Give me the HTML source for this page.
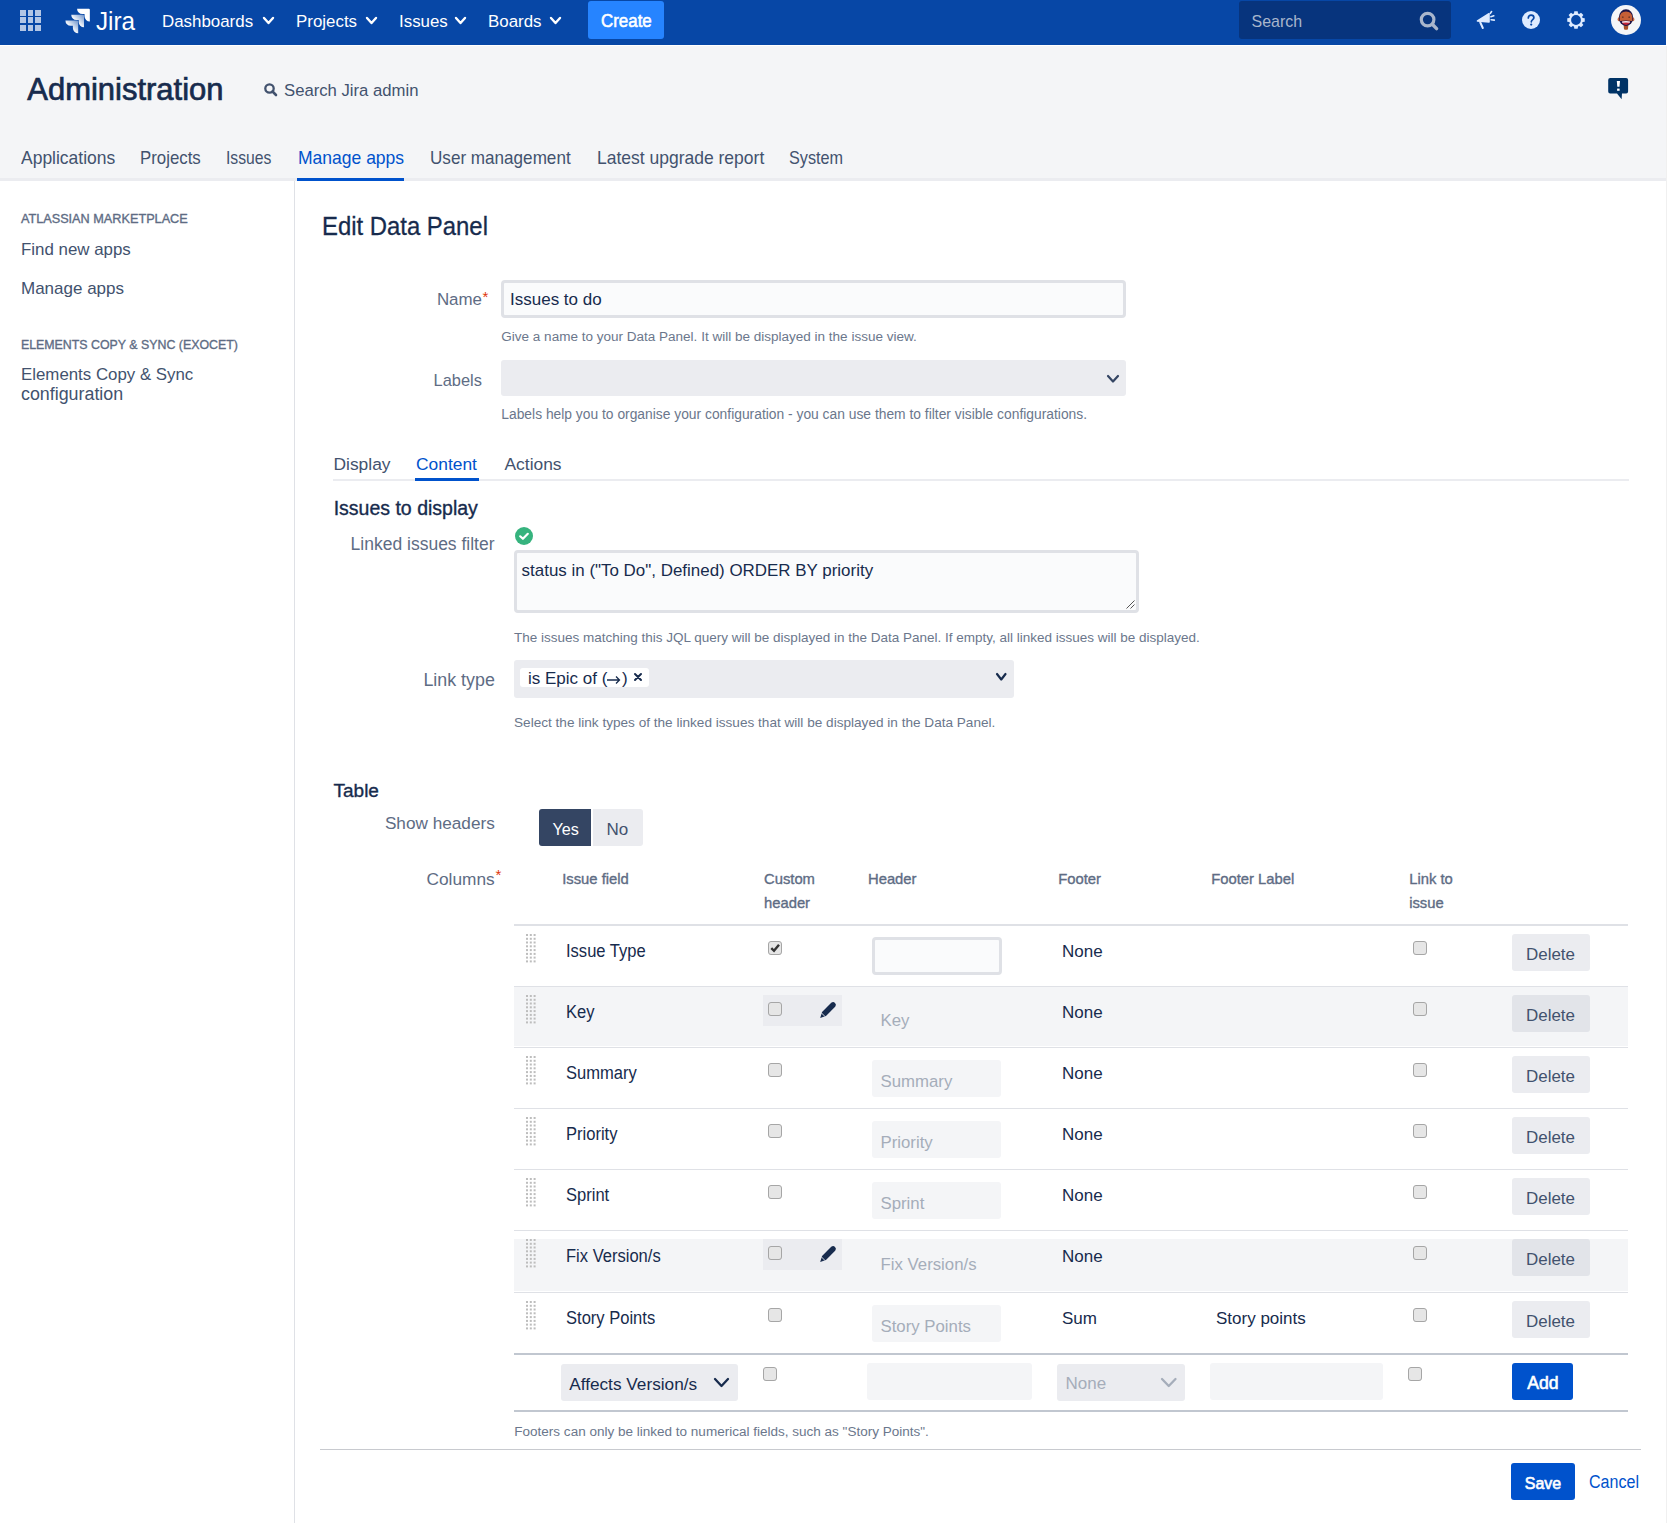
<!DOCTYPE html>
<html><head><meta charset="utf-8"><title>Edit Data Panel - Jira</title>
<style>
html,body{margin:0;padding:0;}
body{width:1667px;height:1523px;position:relative;overflow:hidden;background:#fff;font-family:"Liberation Sans",sans-serif;}
.t{position:absolute;white-space:nowrap;}
.r{position:absolute;}
svg.r{overflow:visible;}
</style></head><body>
<div class="r" style="left:0px;top:0px;width:1666px;height:45px;background:#0747A6;"></div>
<div class="r" style="left:20.0px;top:10.0px;width:5.800000000000001px;height:5.800000000000001px;background:#B3C6E5;"></div>
<div class="r" style="left:20.0px;top:17.4px;width:5.800000000000001px;height:5.800000000000001px;background:#B3C6E5;"></div>
<div class="r" style="left:20.0px;top:24.8px;width:5.800000000000001px;height:5.800000000000001px;background:#B3C6E5;"></div>
<div class="r" style="left:27.7px;top:10.0px;width:5.800000000000001px;height:5.800000000000001px;background:#B3C6E5;"></div>
<div class="r" style="left:27.7px;top:17.4px;width:5.800000000000001px;height:5.800000000000001px;background:#B3C6E5;"></div>
<div class="r" style="left:27.7px;top:24.8px;width:5.800000000000001px;height:5.800000000000001px;background:#B3C6E5;"></div>
<div class="r" style="left:35.4px;top:10.0px;width:5.799999999999997px;height:5.800000000000001px;background:#B3C6E5;"></div>
<div class="r" style="left:35.4px;top:17.4px;width:5.799999999999997px;height:5.800000000000001px;background:#B3C6E5;"></div>
<div class="r" style="left:35.4px;top:24.8px;width:5.799999999999997px;height:5.800000000000001px;background:#B3C6E5;"></div>
<svg class="r" style="left:63px;top:5.5px" width="30" height="30" viewBox="0 0 32 32">
<defs><linearGradient id="lg1" x1="100%" y1="0%" x2="40%" y2="60%"><stop offset="0" stop-color="#fff" stop-opacity="0.4"/><stop offset="1" stop-color="#fff"/></linearGradient></defs>
<path fill="#fff" d="M27.545 3.003H15.003a5.66 5.66 0 0 0 5.66 5.66h2.31v2.23a5.66 5.66 0 0 0 5.65 5.65V4.083a1.08 1.08 0 0 0-1.078-1.08z"/>
<path fill="url(#lg1)" d="M21.34 9.253H8.79a5.66 5.66 0 0 0 5.65 5.65h2.32v2.24a5.66 5.66 0 0 0 5.66 5.65V10.333a1.08 1.08 0 0 0-1.08-1.08z"/>
<path fill="url(#lg1)" d="M15.13 15.503H2.58a5.66 5.66 0 0 0 5.66 5.66h2.32v2.23a5.66 5.66 0 0 0 5.65 5.65V16.583a1.08 1.08 0 0 0-1.08-1.08z"/>
</svg>
<div class="t" style="left:96.00px;top:4.12px;font-size:26.5px;line-height:34px;color:#fff;transform:scaleX(0.915);transform-origin:0 0;">Jira</div>
<div class="t" style="left:162.00px;top:10.64px;font-size:16.9px;line-height:22px;color:#fff;">Dashboards</div>
<svg class="r" style="left:262px;top:15.5px" width="13" height="9.0"><path d="M2 2 L6.5 7.0 L11 2" fill="none" stroke="#fff" stroke-width="2.4" stroke-linecap="round" stroke-linejoin="round"/></svg>
<div class="t" style="left:296.00px;top:10.64px;font-size:16.9px;line-height:22px;color:#fff;">Projects</div>
<svg class="r" style="left:365px;top:15.5px" width="13" height="9.0"><path d="M2 2 L6.5 7.0 L11 2" fill="none" stroke="#fff" stroke-width="2.4" stroke-linecap="round" stroke-linejoin="round"/></svg>
<div class="t" style="left:399.00px;top:10.64px;font-size:16.9px;line-height:22px;color:#fff;">Issues</div>
<svg class="r" style="left:454px;top:15.5px" width="13" height="9.0"><path d="M2 2 L6.5 7.0 L11 2" fill="none" stroke="#fff" stroke-width="2.4" stroke-linecap="round" stroke-linejoin="round"/></svg>
<div class="t" style="left:488.00px;top:10.64px;font-size:16.9px;line-height:22px;color:#fff;">Boards</div>
<svg class="r" style="left:549px;top:15.5px" width="13" height="9.0"><path d="M2 2 L6.5 7.0 L11 2" fill="none" stroke="#fff" stroke-width="2.4" stroke-linecap="round" stroke-linejoin="round"/></svg>
<div class="r" style="left:588px;top:1px;width:76px;height:38px;background:#2684FF;border-radius:3px;"></div>
<div class="t" style="left:600.88px;top:9.19px;font-size:18.2px;line-height:24px;color:#fff;-webkit-text-stroke:0.55px #fff;transform:scaleX(0.93);transform-origin:0 0;">Create</div>
<div class="r" style="left:1239px;top:1px;width:212px;height:38px;background:#07347D;border-radius:3px;"></div>
<div class="t" style="left:1251.50px;top:11.47px;font-size:15.96px;line-height:21px;color:#A9B6CC;">Search</div>
<svg class="r" style="left:1416px;top:8px" width="26" height="26"><circle cx="11.6" cy="11.6" r="6.3" fill="none" stroke="#A9B6CC" stroke-width="3.2"/><path d="M16.3 16.3 L20.6 20.6" stroke="#A9B6CC" stroke-width="3.4" stroke-linecap="round"/></svg>
<svg class="r" style="left:1474px;top:8px" width="24" height="24" fill="#DEEBFF" stroke="#DEEBFF">
<path d="M3.5 13 L15 5.8 L15 14 Z" stroke-width="1.6" stroke-linejoin="round"/>
<path d="M6.3 14.5 L8.8 20" stroke-width="2" stroke-linecap="round"/>
<path d="M16.2 5.4 L17.6 3.6 M16.9 8.7 L19.8 7.8 M17.1 11.8 L20.3 12.1" stroke-width="1.6" stroke-linecap="round"/></svg>
<svg class="r" style="left:1522px;top:11px" width="18" height="18"><circle cx="9" cy="9" r="9" fill="#DEEBFF"/>
<path d="M6.3 7 C6.3 5.2 7.5 4.2 9.1 4.2 C10.8 4.2 11.9 5.3 11.9 6.7 C11.9 8.5 9.3 8.7 9.3 10.8" fill="none" stroke="#0747A6" stroke-width="1.7" stroke-linecap="round"/><circle cx="9.2" cy="13.6" r="1.1" fill="#0747A6"/></svg>
<svg class="r" style="left:1567px;top:11px" width="18" height="18"><path fill-rule="evenodd" fill="#DEEBFF" d="M6.96,2.41 L7.32,0.26 L10.68,0.26 L11.04,2.41 L12.22,2.90 L13.99,1.63 L16.37,4.01 L15.10,5.78 L15.59,6.96 L17.74,7.32 L17.74,10.68 L15.59,11.04 L15.10,12.22 L16.37,13.99 L13.99,16.37 L12.22,15.10 L11.04,15.59 L10.68,17.74 L7.32,17.74 L6.96,15.59 L5.78,15.10 L4.01,16.37 L1.63,13.99 L2.90,12.22 L2.41,11.04 L0.26,10.68 L0.26,7.32 L2.41,6.96 L2.90,5.78 L1.63,4.01 L4.01,1.63 L5.78,2.90 Z M9 4.1 A4.9 4.9 0 1 0 9 13.9 A4.9 4.9 0 1 0 9 4.1 Z"/></svg>
<svg class="r" style="left:1611px;top:5px" width="30" height="30" viewBox="0 0 30 30">
<circle cx="15" cy="15" r="15" fill="#F4F5F7"/>
<path d="M12.6 19 H17.4 L17 24.2 Q15 25.4 13 24.2 Z" fill="#A9522A"/>
<ellipse cx="8" cy="14.4" rx="1.4" ry="1.8" fill="#C65F36"/>
<ellipse cx="22" cy="14.4" rx="1.4" ry="1.8" fill="#C65F36"/>
<ellipse cx="15" cy="12.6" rx="7.2" ry="8.3" fill="#1D1446"/>
<path d="M8.6 12.5 Q9 6.8 15 6.6 Q21 6.8 21.4 12.5 L21 16 Q15 15 9 16 Z" fill="#C65F36"/>
<circle cx="11.8" cy="12.2" r="0.9" fill="#7A3A28"/><circle cx="18.2" cy="12.2" r="0.9" fill="#7A3A28"/>
<path d="M11 16.6 Q15 15.6 19 16.6 Q18.6 19.8 15 19.9 Q11.4 19.8 11 16.6 Z" fill="#C4243A"/>
<path d="M11 16.6 Q15 15.6 19 16.6 L18.8 17.8 Q15 17.2 11.2 17.8 Z" fill="#F0F0F5"/>
</svg>
<div class="r" style="left:0px;top:46px;width:1666px;height:132px;background:#F4F5F7;"></div>
<div class="r" style="left:0px;top:178px;width:1666px;height:3px;background:#EBECF0;"></div>
<div class="r" style="left:1666px;top:46px;width:1px;height:1477px;background:#F0F0F0;"></div>
<div class="r" style="left:1666px;top:0px;width:1px;height:46px;background:#FFFFFF;"></div>
<div class="t" style="left:27.35px;top:69.77px;font-size:30.96px;line-height:40px;color:#172B4D;-webkit-text-stroke:0.7px #172B4D;">Administration</div>
<svg class="r" style="left:262px;top:81px" width="18" height="18"><circle cx="7.5" cy="7.5" r="4.2" fill="none" stroke="#42526E" stroke-width="2.3"/><path d="M10.5 10.5 L14 14" stroke="#42526E" stroke-width="2.6" stroke-linecap="round"/></svg>
<div class="t" style="left:284.00px;top:79.71px;font-size:16.7px;line-height:22px;color:#42526E;">Search Jira admin</div>
<svg class="r" style="left:1606px;top:76px" width="26" height="26" viewBox="0 0 26 26">
<path d="M4.2 2 H20.1 Q22.1 2 22.1 4 V15.6 Q22.1 17.6 20.1 17.6 H16 L15.6 23.3 L11 17.6 H4.2 Q2.2 17.6 2.2 15.6 V4 Q2.2 2 4.2 2 Z" fill="#003366"/>
<path d="M10.8 5 H14 L13.5 10.8 H11.3 Z" fill="#fff"/><rect x="11.1" y="12.6" width="2.5" height="2.2" fill="#fff"/></svg>
<div class="t" style="left:20.60px;top:145.42px;font-size:19.0px;line-height:25px;color:#42526E;transform:scaleX(0.9198);transform-origin:0 0;">Applications</div>
<div class="t" style="left:140.40px;top:145.42px;font-size:19.0px;line-height:25px;color:#42526E;transform:scaleX(0.885);transform-origin:0 0;">Projects</div>
<div class="t" style="left:226.40px;top:145.42px;font-size:19.0px;line-height:25px;color:#42526E;transform:scaleX(0.8268);transform-origin:0 0;">Issues</div>
<div class="t" style="left:297.70px;top:145.42px;font-size:19.0px;line-height:25px;color:#0052CC;transform:scaleX(0.9215);transform-origin:0 0;">Manage apps</div>
<div class="t" style="left:429.80px;top:145.42px;font-size:19.0px;line-height:25px;color:#42526E;transform:scaleX(0.8998);transform-origin:0 0;">User management</div>
<div class="t" style="left:596.50px;top:145.42px;font-size:19.0px;line-height:25px;color:#42526E;transform:scaleX(0.9205);transform-origin:0 0;">Latest upgrade report</div>
<div class="t" style="left:789.00px;top:145.42px;font-size:19.0px;line-height:25px;color:#42526E;transform:scaleX(0.8535);transform-origin:0 0;">System</div>
<div class="r" style="left:297px;top:178px;width:107px;height:3px;background:#0052CC;"></div>
<div class="r" style="left:294px;top:181px;width:1px;height:1342px;background:#DFE1E6;"></div>
<div class="t" style="left:20.88px;top:211.40px;font-size:12.7px;line-height:17px;color:#5E6C84;-webkit-text-stroke:0.35px #5E6C84;">ATLASSIAN MARKETPLACE</div>
<div class="t" style="left:21.00px;top:239.45px;font-size:16.89px;line-height:22px;color:#42526E;">Find new apps</div>
<div class="t" style="left:21.00px;top:277.61px;font-size:17.0px;line-height:22px;color:#42526E;">Manage apps</div>
<div class="t" style="left:20.88px;top:337.21px;font-size:12.39px;line-height:16px;color:#5E6C84;-webkit-text-stroke:0.35px #5E6C84;">ELEMENTS COPY &amp; SYNC (EXOCET)</div>
<div class="t" style="left:21.00px;top:364.06px;font-size:16.85px;line-height:22px;color:#42526E;">Elements Copy &amp; Sync</div>
<div class="t" style="left:21.00px;top:383.01px;font-size:17.85px;line-height:23px;color:#42526E;">configuration</div>
<div class="t" style="left:321.85px;top:208.99px;font-size:26.3px;line-height:34px;color:#172B4D;-webkit-text-stroke:0.3px #172B4D;transform:scaleX(0.9082);transform-origin:0 0;">Edit Data Panel</div>
<div class="t" style="left:436.88px;top:289.34px;font-size:16.9px;line-height:22px;color:#5E6C84;">Name</div>
<div class="t" style="left:482.5px;top:289px;font-size:15px;line-height:15px;color:#DE350B">*</div>
<div class="r" style="left:501px;top:280px;width:625px;height:38px;background:#FAFBFC;border:3px solid #DFE1E6;border-radius:4px;box-sizing:border-box;"></div>
<div class="t" style="left:510.00px;top:289.31px;font-size:17px;line-height:22px;color:#172B4D;">Issues to do</div>
<div class="t" style="left:501.30px;top:328.42px;font-size:13.52px;line-height:18px;color:#6B778C;">Give a name to your Data Panel. It will be displayed in the issue view.</div>
<div class="t" style="left:433.62px;top:370.32px;font-size:16.4px;line-height:21px;color:#5E6C84;">Labels</div>
<div class="r" style="left:501px;top:360px;width:625px;height:36px;background:#EBECF0;border-radius:3px;"></div>
<svg class="r" style="left:1105.5px;top:374px" width="14.0" height="9.5"><path d="M2 2 L7.0 7.5 L12.0 2" fill="none" stroke="#344563" stroke-width="2.2" stroke-linecap="round" stroke-linejoin="round"/></svg>
<div class="t" style="left:501.30px;top:405.40px;font-size:13.84px;line-height:18px;color:#6B778C;">Labels help you to organise your configuration - you can use them to filter visible configurations.</div>
<div class="r" style="left:333px;top:479px;width:1296px;height:2px;background:#EBECF0;"></div>
<div class="t" style="left:333.50px;top:452.67px;font-size:17.4px;line-height:23px;color:#42526E;">Display</div>
<div class="t" style="left:416.00px;top:452.67px;font-size:17.4px;line-height:23px;color:#0052CC;">Content</div>
<div class="t" style="left:504.50px;top:452.67px;font-size:17.4px;line-height:23px;color:#42526E;">Actions</div>
<div class="r" style="left:415px;top:478px;width:64px;height:3px;background:#0052CC;"></div>
<div class="t" style="left:333.68px;top:495.54px;font-size:19.51px;line-height:25px;color:#172B4D;-webkit-text-stroke:0.35px #172B4D;">Issues to display</div>
<div class="t" style="left:350.58px;top:533.24px;font-size:17.5px;line-height:23px;color:#5E6C84;">Linked issues filter</div>
<svg class="r" style="left:515px;top:527px" width="18" height="18"><circle cx="9" cy="9" r="9" fill="#36B37E"/><path d="M5.2 9.3 L7.9 11.8 L12.8 6.8" fill="none" stroke="#fff" stroke-width="2.2" stroke-linecap="round" stroke-linejoin="round"/></svg>
<div class="r" style="left:514px;top:550px;width:625px;height:63px;background:#FAFBFC;border:3px solid #DFE1E6;border-radius:4px;box-sizing:border-box;"></div>
<div class="t" style="left:521.60px;top:560.32px;font-size:16.96px;line-height:22px;color:#172B4D;">status in ("To Do", Defined) ORDER BY priority</div>
<svg class="r" style="left:1124px;top:598px" width="12" height="12"><path d="M10.5 2.5 L2.5 10.5 M10.5 6.5 L6.5 10.5" stroke="#555" stroke-width="1"/></svg>
<div class="t" style="left:514.00px;top:629.22px;font-size:13.5px;line-height:18px;color:#6B778C;">The issues matching this JQL query will be displayed in the Data Panel. If empty, all linked issues will be displayed.</div>
<div class="t" style="left:423.40px;top:668.91px;font-size:17.85px;line-height:23px;color:#5E6C84;">Link type</div>
<div class="r" style="left:514px;top:660px;width:500px;height:38px;background:#EBECF0;border-radius:3px;"></div>
<div class="r" style="left:520px;top:668px;width:129px;height:19px;background:#fff;border-radius:3px;"></div>
<div class="t" style="left:528.00px;top:668.11px;font-size:17px;line-height:22px;color:#172B4D;">is Epic of (</div>
<svg class="r" style="left:606px;top:671px" width="16" height="16"><path d="M1 9 H13.5 M10 5.5 L13.5 9 L10 12.5" fill="none" stroke="#172B4D" stroke-width="1.3"/></svg>
<div class="t" style="left:622.00px;top:668.11px;font-size:17px;line-height:22px;color:#172B4D;">)</div>
<svg class="r" style="left:633px;top:672px" width="10" height="10"><path d="M2 2 L8 8 M8 2 L2 8" stroke="#172B4D" stroke-width="2" stroke-linecap="round"/></svg>
<svg class="r" style="left:994.5px;top:672px" width="12.5" height="9.5"><path d="M2 2 L6.25 7.5 L10.5 2" fill="none" stroke="#172B4D" stroke-width="2.2" stroke-linecap="round" stroke-linejoin="round"/></svg>
<div class="t" style="left:514.00px;top:713.79px;font-size:13.6px;line-height:18px;color:#6B778C;">Select the link types of the linked issues that will be displayed in the Data Panel.</div>
<div class="t" style="left:333.48px;top:778.11px;font-size:19.02px;line-height:25px;color:#172B4D;-webkit-text-stroke:0.35px #172B4D;">Table</div>
<div class="t" style="left:384.89px;top:812.44px;font-size:17.2px;line-height:22px;color:#5E6C84;">Show headers</div>
<div class="r" style="left:539px;top:809px;width:52px;height:37px;background:#344563;border-radius:3px 0 0 3px;"></div>
<div class="r" style="left:593px;top:809px;width:50px;height:37px;background:#EBECF0;border-radius:0 3px 3px 0;"></div>
<div class="t" style="left:552.50px;top:819.39px;font-size:16.2px;line-height:21px;color:#fff;">Yes</div>
<div class="t" style="left:606.60px;top:818.61px;font-size:17px;line-height:22px;color:#42526E;">No</div>
<div class="t" style="left:426.47px;top:867.91px;font-size:17.3px;line-height:22px;color:#5E6C84;">Columns</div>
<div class="t" style="left:495.5px;top:867px;font-size:15px;line-height:15px;color:#DE350B">*</div>
<div class="t" style="left:562.17px;top:869.87px;font-size:14.8px;line-height:19px;color:#5E6C84;-webkit-text-stroke:0.35px #5E6C84;">Issue field</div>
<div class="t" style="left:763.97px;top:869.87px;font-size:14.8px;line-height:19px;color:#5E6C84;-webkit-text-stroke:0.35px #5E6C84;">Custom</div>
<div class="t" style="left:763.97px;top:894.27px;font-size:14.8px;line-height:19px;color:#5E6C84;-webkit-text-stroke:0.35px #5E6C84;">header</div>
<div class="t" style="left:867.97px;top:869.87px;font-size:14.8px;line-height:19px;color:#5E6C84;-webkit-text-stroke:0.35px #5E6C84;">Header</div>
<div class="t" style="left:1058.17px;top:869.87px;font-size:14.8px;line-height:19px;color:#5E6C84;-webkit-text-stroke:0.35px #5E6C84;">Footer</div>
<div class="t" style="left:1211.17px;top:869.87px;font-size:14.8px;line-height:19px;color:#5E6C84;-webkit-text-stroke:0.35px #5E6C84;">Footer Label</div>
<div class="t" style="left:1409.17px;top:869.87px;font-size:14.8px;line-height:19px;color:#5E6C84;-webkit-text-stroke:0.35px #5E6C84;">Link to</div>
<div class="t" style="left:1409.17px;top:894.47px;font-size:14.8px;line-height:19px;color:#5E6C84;-webkit-text-stroke:0.35px #5E6C84;">issue</div>
<div class="r" style="left:514px;top:924px;width:1114px;height:2px;background:#DFE1E6;"></div>
<svg class="r" style="left:526px;top:933.8px" width="12" height="30"><rect x="0.0" y="0.0" width="2" height="2" fill="#BDBDBD"/><rect x="0.0" y="3.8" width="2" height="2" fill="#BDBDBD"/><rect x="0.0" y="7.5" width="2" height="2" fill="#BDBDBD"/><rect x="0.0" y="11.3" width="2" height="2" fill="#BDBDBD"/><rect x="0.0" y="15.1" width="2" height="2" fill="#BDBDBD"/><rect x="0.0" y="18.9" width="2" height="2" fill="#BDBDBD"/><rect x="0.0" y="22.6" width="2" height="2" fill="#BDBDBD"/><rect x="0.0" y="26.4" width="2" height="2" fill="#BDBDBD"/><rect x="3.8" y="0.0" width="2" height="2" fill="#BDBDBD"/><rect x="3.8" y="3.8" width="2" height="2" fill="#BDBDBD"/><rect x="3.8" y="7.5" width="2" height="2" fill="#BDBDBD"/><rect x="3.8" y="11.3" width="2" height="2" fill="#BDBDBD"/><rect x="3.8" y="15.1" width="2" height="2" fill="#BDBDBD"/><rect x="3.8" y="18.9" width="2" height="2" fill="#BDBDBD"/><rect x="3.8" y="22.6" width="2" height="2" fill="#BDBDBD"/><rect x="3.8" y="26.4" width="2" height="2" fill="#BDBDBD"/><rect x="7.6" y="0.0" width="2" height="2" fill="#BDBDBD"/><rect x="7.6" y="3.8" width="2" height="2" fill="#BDBDBD"/><rect x="7.6" y="7.5" width="2" height="2" fill="#BDBDBD"/><rect x="7.6" y="11.3" width="2" height="2" fill="#BDBDBD"/><rect x="7.6" y="15.1" width="2" height="2" fill="#BDBDBD"/><rect x="7.6" y="18.9" width="2" height="2" fill="#BDBDBD"/><rect x="7.6" y="22.6" width="2" height="2" fill="#BDBDBD"/><rect x="7.6" y="26.4" width="2" height="2" fill="#BDBDBD"/></svg>
<div class="t" style="left:566.00px;top:939.90px;font-size:17.6px;line-height:23px;color:#172B4D;transform:scaleX(0.94);transform-origin:0 0;">Issue Type</div>
<svg class="r" style="left:768px;top:941px" width="14" height="15"><rect x="0.5" y="1" width="13" height="13" rx="2.5" fill="#9E9E9E" opacity="0.35"/><rect x="0.5" y="0.5" width="13" height="13" rx="2.5" fill="#E6E6E6" stroke="#A6A6A6" stroke-width="1"/><path d="M3.3 7.2 L6 9.8 L11 3.8" fill="none" stroke="#333" stroke-width="2.4" stroke-linejoin="miter"/></svg>
<div class="r" style="left:872px;top:937px;width:130px;height:38px;background:#FAFBFC;border:3px solid #DFE1E6;border-radius:4px;box-sizing:border-box;"></div>
<div class="t" style="left:1062.00px;top:940.61px;font-size:17px;line-height:22px;color:#172B4D;">None</div>
<svg class="r" style="left:1413px;top:941px" width="14" height="15"><rect x="0.5" y="1" width="13" height="13" rx="2.5" fill="#9E9E9E" opacity="0.35"/><rect x="0.5" y="0.5" width="13" height="13" rx="2.5" fill="#E6E6E6" stroke="#A6A6A6" stroke-width="1"/></svg>
<div class="r" style="left:1512px;top:934px;width:78px;height:37px;background:#EBECF0;border-radius:3px;"></div>
<div class="t" style="left:1526.00px;top:944.12px;font-size:16.96px;line-height:22px;color:#42526E;">Delete</div>
<div class="r" style="left:514px;top:987px;width:1114px;height:59px;background:#F4F5F7;"></div>
<div class="r" style="left:514px;top:986px;width:1114px;height:1px;background:#DFE1E6;"></div>
<svg class="r" style="left:526px;top:994.8px" width="12" height="30"><rect x="0.0" y="0.0" width="2" height="2" fill="#BDBDBD"/><rect x="0.0" y="3.8" width="2" height="2" fill="#BDBDBD"/><rect x="0.0" y="7.5" width="2" height="2" fill="#BDBDBD"/><rect x="0.0" y="11.3" width="2" height="2" fill="#BDBDBD"/><rect x="0.0" y="15.1" width="2" height="2" fill="#BDBDBD"/><rect x="0.0" y="18.9" width="2" height="2" fill="#BDBDBD"/><rect x="0.0" y="22.6" width="2" height="2" fill="#BDBDBD"/><rect x="0.0" y="26.4" width="2" height="2" fill="#BDBDBD"/><rect x="3.8" y="0.0" width="2" height="2" fill="#BDBDBD"/><rect x="3.8" y="3.8" width="2" height="2" fill="#BDBDBD"/><rect x="3.8" y="7.5" width="2" height="2" fill="#BDBDBD"/><rect x="3.8" y="11.3" width="2" height="2" fill="#BDBDBD"/><rect x="3.8" y="15.1" width="2" height="2" fill="#BDBDBD"/><rect x="3.8" y="18.9" width="2" height="2" fill="#BDBDBD"/><rect x="3.8" y="22.6" width="2" height="2" fill="#BDBDBD"/><rect x="3.8" y="26.4" width="2" height="2" fill="#BDBDBD"/><rect x="7.6" y="0.0" width="2" height="2" fill="#BDBDBD"/><rect x="7.6" y="3.8" width="2" height="2" fill="#BDBDBD"/><rect x="7.6" y="7.5" width="2" height="2" fill="#BDBDBD"/><rect x="7.6" y="11.3" width="2" height="2" fill="#BDBDBD"/><rect x="7.6" y="15.1" width="2" height="2" fill="#BDBDBD"/><rect x="7.6" y="18.9" width="2" height="2" fill="#BDBDBD"/><rect x="7.6" y="22.6" width="2" height="2" fill="#BDBDBD"/><rect x="7.6" y="26.4" width="2" height="2" fill="#BDBDBD"/></svg>
<div class="t" style="left:566.00px;top:1000.90px;font-size:17.6px;line-height:23px;color:#172B4D;transform:scaleX(0.94);transform-origin:0 0;">Key</div>
<div class="r" style="left:763px;top:995px;width:79px;height:31px;background:#EBECF0;"></div>
<svg class="r" style="left:818.5px;top:1001px" width="18" height="18" viewBox="0 0 18 18"><path d="M1.2 17 L3.06 11.06 L12.26 1.86 A2.75 2.75 0 0 1 16.14 5.74 L6.94 14.94 Z" fill="#172B4D"/><path d="M2.4 11.9 L6.1 15.6" stroke="#EBECF0" stroke-width="0.9"/></svg>
<svg class="r" style="left:768px;top:1002px" width="14" height="15"><rect x="0.5" y="1" width="13" height="13" rx="2.5" fill="#9E9E9E" opacity="0.35"/><rect x="0.5" y="0.5" width="13" height="13" rx="2.5" fill="#E6E6E6" stroke="#A6A6A6" stroke-width="1"/></svg>
<div class="t" style="left:880.50px;top:1009.68px;font-size:16.8px;line-height:22px;color:#A5ADBA;">Key</div>
<div class="t" style="left:1062.00px;top:1001.61px;font-size:17px;line-height:22px;color:#172B4D;">None</div>
<svg class="r" style="left:1413px;top:1002px" width="14" height="15"><rect x="0.5" y="1" width="13" height="13" rx="2.5" fill="#9E9E9E" opacity="0.35"/><rect x="0.5" y="0.5" width="13" height="13" rx="2.5" fill="#E6E6E6" stroke="#A6A6A6" stroke-width="1"/></svg>
<div class="r" style="left:1512px;top:995px;width:78px;height:37px;background:#E2E4E9;border-radius:3px;"></div>
<div class="t" style="left:1526.00px;top:1005.12px;font-size:16.96px;line-height:22px;color:#42526E;">Delete</div>
<div class="r" style="left:514px;top:1047px;width:1114px;height:1px;background:#DFE1E6;"></div>
<svg class="r" style="left:526px;top:1055.8px" width="12" height="30"><rect x="0.0" y="0.0" width="2" height="2" fill="#BDBDBD"/><rect x="0.0" y="3.8" width="2" height="2" fill="#BDBDBD"/><rect x="0.0" y="7.5" width="2" height="2" fill="#BDBDBD"/><rect x="0.0" y="11.3" width="2" height="2" fill="#BDBDBD"/><rect x="0.0" y="15.1" width="2" height="2" fill="#BDBDBD"/><rect x="0.0" y="18.9" width="2" height="2" fill="#BDBDBD"/><rect x="0.0" y="22.6" width="2" height="2" fill="#BDBDBD"/><rect x="0.0" y="26.4" width="2" height="2" fill="#BDBDBD"/><rect x="3.8" y="0.0" width="2" height="2" fill="#BDBDBD"/><rect x="3.8" y="3.8" width="2" height="2" fill="#BDBDBD"/><rect x="3.8" y="7.5" width="2" height="2" fill="#BDBDBD"/><rect x="3.8" y="11.3" width="2" height="2" fill="#BDBDBD"/><rect x="3.8" y="15.1" width="2" height="2" fill="#BDBDBD"/><rect x="3.8" y="18.9" width="2" height="2" fill="#BDBDBD"/><rect x="3.8" y="22.6" width="2" height="2" fill="#BDBDBD"/><rect x="3.8" y="26.4" width="2" height="2" fill="#BDBDBD"/><rect x="7.6" y="0.0" width="2" height="2" fill="#BDBDBD"/><rect x="7.6" y="3.8" width="2" height="2" fill="#BDBDBD"/><rect x="7.6" y="7.5" width="2" height="2" fill="#BDBDBD"/><rect x="7.6" y="11.3" width="2" height="2" fill="#BDBDBD"/><rect x="7.6" y="15.1" width="2" height="2" fill="#BDBDBD"/><rect x="7.6" y="18.9" width="2" height="2" fill="#BDBDBD"/><rect x="7.6" y="22.6" width="2" height="2" fill="#BDBDBD"/><rect x="7.6" y="26.4" width="2" height="2" fill="#BDBDBD"/></svg>
<div class="t" style="left:566.00px;top:1061.90px;font-size:17.6px;line-height:23px;color:#172B4D;transform:scaleX(0.94);transform-origin:0 0;">Summary</div>
<svg class="r" style="left:768px;top:1063px" width="14" height="15"><rect x="0.5" y="1" width="13" height="13" rx="2.5" fill="#9E9E9E" opacity="0.35"/><rect x="0.5" y="0.5" width="13" height="13" rx="2.5" fill="#E6E6E6" stroke="#A6A6A6" stroke-width="1"/></svg>
<div class="r" style="left:872px;top:1060px;width:129px;height:37px;background:#F4F5F7;border-radius:3px;"></div>
<div class="t" style="left:880.50px;top:1070.68px;font-size:16.8px;line-height:22px;color:#A5ADBA;">Summary</div>
<div class="t" style="left:1062.00px;top:1062.61px;font-size:17px;line-height:22px;color:#172B4D;">None</div>
<svg class="r" style="left:1413px;top:1063px" width="14" height="15"><rect x="0.5" y="1" width="13" height="13" rx="2.5" fill="#9E9E9E" opacity="0.35"/><rect x="0.5" y="0.5" width="13" height="13" rx="2.5" fill="#E6E6E6" stroke="#A6A6A6" stroke-width="1"/></svg>
<div class="r" style="left:1512px;top:1056px;width:78px;height:37px;background:#EBECF0;border-radius:3px;"></div>
<div class="t" style="left:1526.00px;top:1066.12px;font-size:16.96px;line-height:22px;color:#42526E;">Delete</div>
<div class="r" style="left:514px;top:1108px;width:1114px;height:1px;background:#DFE1E6;"></div>
<svg class="r" style="left:526px;top:1116.8px" width="12" height="30"><rect x="0.0" y="0.0" width="2" height="2" fill="#BDBDBD"/><rect x="0.0" y="3.8" width="2" height="2" fill="#BDBDBD"/><rect x="0.0" y="7.5" width="2" height="2" fill="#BDBDBD"/><rect x="0.0" y="11.3" width="2" height="2" fill="#BDBDBD"/><rect x="0.0" y="15.1" width="2" height="2" fill="#BDBDBD"/><rect x="0.0" y="18.9" width="2" height="2" fill="#BDBDBD"/><rect x="0.0" y="22.6" width="2" height="2" fill="#BDBDBD"/><rect x="0.0" y="26.4" width="2" height="2" fill="#BDBDBD"/><rect x="3.8" y="0.0" width="2" height="2" fill="#BDBDBD"/><rect x="3.8" y="3.8" width="2" height="2" fill="#BDBDBD"/><rect x="3.8" y="7.5" width="2" height="2" fill="#BDBDBD"/><rect x="3.8" y="11.3" width="2" height="2" fill="#BDBDBD"/><rect x="3.8" y="15.1" width="2" height="2" fill="#BDBDBD"/><rect x="3.8" y="18.9" width="2" height="2" fill="#BDBDBD"/><rect x="3.8" y="22.6" width="2" height="2" fill="#BDBDBD"/><rect x="3.8" y="26.4" width="2" height="2" fill="#BDBDBD"/><rect x="7.6" y="0.0" width="2" height="2" fill="#BDBDBD"/><rect x="7.6" y="3.8" width="2" height="2" fill="#BDBDBD"/><rect x="7.6" y="7.5" width="2" height="2" fill="#BDBDBD"/><rect x="7.6" y="11.3" width="2" height="2" fill="#BDBDBD"/><rect x="7.6" y="15.1" width="2" height="2" fill="#BDBDBD"/><rect x="7.6" y="18.9" width="2" height="2" fill="#BDBDBD"/><rect x="7.6" y="22.6" width="2" height="2" fill="#BDBDBD"/><rect x="7.6" y="26.4" width="2" height="2" fill="#BDBDBD"/></svg>
<div class="t" style="left:566.00px;top:1122.90px;font-size:17.6px;line-height:23px;color:#172B4D;transform:scaleX(0.94);transform-origin:0 0;">Priority</div>
<svg class="r" style="left:768px;top:1124px" width="14" height="15"><rect x="0.5" y="1" width="13" height="13" rx="2.5" fill="#9E9E9E" opacity="0.35"/><rect x="0.5" y="0.5" width="13" height="13" rx="2.5" fill="#E6E6E6" stroke="#A6A6A6" stroke-width="1"/></svg>
<div class="r" style="left:872px;top:1121px;width:129px;height:37px;background:#F4F5F7;border-radius:3px;"></div>
<div class="t" style="left:880.50px;top:1131.68px;font-size:16.8px;line-height:22px;color:#A5ADBA;">Priority</div>
<div class="t" style="left:1062.00px;top:1123.61px;font-size:17px;line-height:22px;color:#172B4D;">None</div>
<svg class="r" style="left:1413px;top:1124px" width="14" height="15"><rect x="0.5" y="1" width="13" height="13" rx="2.5" fill="#9E9E9E" opacity="0.35"/><rect x="0.5" y="0.5" width="13" height="13" rx="2.5" fill="#E6E6E6" stroke="#A6A6A6" stroke-width="1"/></svg>
<div class="r" style="left:1512px;top:1117px;width:78px;height:37px;background:#EBECF0;border-radius:3px;"></div>
<div class="t" style="left:1526.00px;top:1127.12px;font-size:16.96px;line-height:22px;color:#42526E;">Delete</div>
<div class="r" style="left:514px;top:1169px;width:1114px;height:1px;background:#DFE1E6;"></div>
<svg class="r" style="left:526px;top:1177.8px" width="12" height="30"><rect x="0.0" y="0.0" width="2" height="2" fill="#BDBDBD"/><rect x="0.0" y="3.8" width="2" height="2" fill="#BDBDBD"/><rect x="0.0" y="7.5" width="2" height="2" fill="#BDBDBD"/><rect x="0.0" y="11.3" width="2" height="2" fill="#BDBDBD"/><rect x="0.0" y="15.1" width="2" height="2" fill="#BDBDBD"/><rect x="0.0" y="18.9" width="2" height="2" fill="#BDBDBD"/><rect x="0.0" y="22.6" width="2" height="2" fill="#BDBDBD"/><rect x="0.0" y="26.4" width="2" height="2" fill="#BDBDBD"/><rect x="3.8" y="0.0" width="2" height="2" fill="#BDBDBD"/><rect x="3.8" y="3.8" width="2" height="2" fill="#BDBDBD"/><rect x="3.8" y="7.5" width="2" height="2" fill="#BDBDBD"/><rect x="3.8" y="11.3" width="2" height="2" fill="#BDBDBD"/><rect x="3.8" y="15.1" width="2" height="2" fill="#BDBDBD"/><rect x="3.8" y="18.9" width="2" height="2" fill="#BDBDBD"/><rect x="3.8" y="22.6" width="2" height="2" fill="#BDBDBD"/><rect x="3.8" y="26.4" width="2" height="2" fill="#BDBDBD"/><rect x="7.6" y="0.0" width="2" height="2" fill="#BDBDBD"/><rect x="7.6" y="3.8" width="2" height="2" fill="#BDBDBD"/><rect x="7.6" y="7.5" width="2" height="2" fill="#BDBDBD"/><rect x="7.6" y="11.3" width="2" height="2" fill="#BDBDBD"/><rect x="7.6" y="15.1" width="2" height="2" fill="#BDBDBD"/><rect x="7.6" y="18.9" width="2" height="2" fill="#BDBDBD"/><rect x="7.6" y="22.6" width="2" height="2" fill="#BDBDBD"/><rect x="7.6" y="26.4" width="2" height="2" fill="#BDBDBD"/></svg>
<div class="t" style="left:566.00px;top:1183.90px;font-size:17.6px;line-height:23px;color:#172B4D;transform:scaleX(0.94);transform-origin:0 0;">Sprint</div>
<svg class="r" style="left:768px;top:1185px" width="14" height="15"><rect x="0.5" y="1" width="13" height="13" rx="2.5" fill="#9E9E9E" opacity="0.35"/><rect x="0.5" y="0.5" width="13" height="13" rx="2.5" fill="#E6E6E6" stroke="#A6A6A6" stroke-width="1"/></svg>
<div class="r" style="left:872px;top:1182px;width:129px;height:37px;background:#F4F5F7;border-radius:3px;"></div>
<div class="t" style="left:880.50px;top:1192.68px;font-size:16.8px;line-height:22px;color:#A5ADBA;">Sprint</div>
<div class="t" style="left:1062.00px;top:1184.61px;font-size:17px;line-height:22px;color:#172B4D;">None</div>
<svg class="r" style="left:1413px;top:1185px" width="14" height="15"><rect x="0.5" y="1" width="13" height="13" rx="2.5" fill="#9E9E9E" opacity="0.35"/><rect x="0.5" y="0.5" width="13" height="13" rx="2.5" fill="#E6E6E6" stroke="#A6A6A6" stroke-width="1"/></svg>
<div class="r" style="left:1512px;top:1178px;width:78px;height:37px;background:#EBECF0;border-radius:3px;"></div>
<div class="t" style="left:1526.00px;top:1188.12px;font-size:16.96px;line-height:22px;color:#42526E;">Delete</div>
<div class="r" style="left:514px;top:1239px;width:1114px;height:52px;background:#F4F5F7;"></div>
<div class="r" style="left:1500px;top:1291px;width:103px;height:1px;background:#fff;"></div>
<div class="r" style="left:514px;top:1230px;width:1114px;height:1px;background:#DFE1E6;"></div>
<svg class="r" style="left:526px;top:1238.8px" width="12" height="30"><rect x="0.0" y="0.0" width="2" height="2" fill="#BDBDBD"/><rect x="0.0" y="3.8" width="2" height="2" fill="#BDBDBD"/><rect x="0.0" y="7.5" width="2" height="2" fill="#BDBDBD"/><rect x="0.0" y="11.3" width="2" height="2" fill="#BDBDBD"/><rect x="0.0" y="15.1" width="2" height="2" fill="#BDBDBD"/><rect x="0.0" y="18.9" width="2" height="2" fill="#BDBDBD"/><rect x="0.0" y="22.6" width="2" height="2" fill="#BDBDBD"/><rect x="0.0" y="26.4" width="2" height="2" fill="#BDBDBD"/><rect x="3.8" y="0.0" width="2" height="2" fill="#BDBDBD"/><rect x="3.8" y="3.8" width="2" height="2" fill="#BDBDBD"/><rect x="3.8" y="7.5" width="2" height="2" fill="#BDBDBD"/><rect x="3.8" y="11.3" width="2" height="2" fill="#BDBDBD"/><rect x="3.8" y="15.1" width="2" height="2" fill="#BDBDBD"/><rect x="3.8" y="18.9" width="2" height="2" fill="#BDBDBD"/><rect x="3.8" y="22.6" width="2" height="2" fill="#BDBDBD"/><rect x="3.8" y="26.4" width="2" height="2" fill="#BDBDBD"/><rect x="7.6" y="0.0" width="2" height="2" fill="#BDBDBD"/><rect x="7.6" y="3.8" width="2" height="2" fill="#BDBDBD"/><rect x="7.6" y="7.5" width="2" height="2" fill="#BDBDBD"/><rect x="7.6" y="11.3" width="2" height="2" fill="#BDBDBD"/><rect x="7.6" y="15.1" width="2" height="2" fill="#BDBDBD"/><rect x="7.6" y="18.9" width="2" height="2" fill="#BDBDBD"/><rect x="7.6" y="22.6" width="2" height="2" fill="#BDBDBD"/><rect x="7.6" y="26.4" width="2" height="2" fill="#BDBDBD"/></svg>
<div class="t" style="left:566.00px;top:1244.90px;font-size:17.6px;line-height:23px;color:#172B4D;transform:scaleX(0.94);transform-origin:0 0;">Fix Version/s</div>
<div class="r" style="left:763px;top:1239px;width:79px;height:31px;background:#EBECF0;"></div>
<svg class="r" style="left:818.5px;top:1245px" width="18" height="18" viewBox="0 0 18 18"><path d="M1.2 17 L3.06 11.06 L12.26 1.86 A2.75 2.75 0 0 1 16.14 5.74 L6.94 14.94 Z" fill="#172B4D"/><path d="M2.4 11.9 L6.1 15.6" stroke="#EBECF0" stroke-width="0.9"/></svg>
<svg class="r" style="left:768px;top:1246px" width="14" height="15"><rect x="0.5" y="1" width="13" height="13" rx="2.5" fill="#9E9E9E" opacity="0.35"/><rect x="0.5" y="0.5" width="13" height="13" rx="2.5" fill="#E6E6E6" stroke="#A6A6A6" stroke-width="1"/></svg>
<div class="t" style="left:880.50px;top:1253.68px;font-size:16.8px;line-height:22px;color:#A5ADBA;">Fix Version/s</div>
<div class="t" style="left:1062.00px;top:1245.61px;font-size:17px;line-height:22px;color:#172B4D;">None</div>
<svg class="r" style="left:1413px;top:1246px" width="14" height="15"><rect x="0.5" y="1" width="13" height="13" rx="2.5" fill="#9E9E9E" opacity="0.35"/><rect x="0.5" y="0.5" width="13" height="13" rx="2.5" fill="#E6E6E6" stroke="#A6A6A6" stroke-width="1"/></svg>
<div class="r" style="left:1512px;top:1239px;width:78px;height:37px;background:#E2E4E9;border-radius:3px;"></div>
<div class="t" style="left:1526.00px;top:1249.12px;font-size:16.96px;line-height:22px;color:#42526E;">Delete</div>
<div class="r" style="left:514px;top:1292px;width:1114px;height:1px;background:#DFE1E6;"></div>
<svg class="r" style="left:526px;top:1300.8px" width="12" height="30"><rect x="0.0" y="0.0" width="2" height="2" fill="#BDBDBD"/><rect x="0.0" y="3.8" width="2" height="2" fill="#BDBDBD"/><rect x="0.0" y="7.5" width="2" height="2" fill="#BDBDBD"/><rect x="0.0" y="11.3" width="2" height="2" fill="#BDBDBD"/><rect x="0.0" y="15.1" width="2" height="2" fill="#BDBDBD"/><rect x="0.0" y="18.9" width="2" height="2" fill="#BDBDBD"/><rect x="0.0" y="22.6" width="2" height="2" fill="#BDBDBD"/><rect x="0.0" y="26.4" width="2" height="2" fill="#BDBDBD"/><rect x="3.8" y="0.0" width="2" height="2" fill="#BDBDBD"/><rect x="3.8" y="3.8" width="2" height="2" fill="#BDBDBD"/><rect x="3.8" y="7.5" width="2" height="2" fill="#BDBDBD"/><rect x="3.8" y="11.3" width="2" height="2" fill="#BDBDBD"/><rect x="3.8" y="15.1" width="2" height="2" fill="#BDBDBD"/><rect x="3.8" y="18.9" width="2" height="2" fill="#BDBDBD"/><rect x="3.8" y="22.6" width="2" height="2" fill="#BDBDBD"/><rect x="3.8" y="26.4" width="2" height="2" fill="#BDBDBD"/><rect x="7.6" y="0.0" width="2" height="2" fill="#BDBDBD"/><rect x="7.6" y="3.8" width="2" height="2" fill="#BDBDBD"/><rect x="7.6" y="7.5" width="2" height="2" fill="#BDBDBD"/><rect x="7.6" y="11.3" width="2" height="2" fill="#BDBDBD"/><rect x="7.6" y="15.1" width="2" height="2" fill="#BDBDBD"/><rect x="7.6" y="18.9" width="2" height="2" fill="#BDBDBD"/><rect x="7.6" y="22.6" width="2" height="2" fill="#BDBDBD"/><rect x="7.6" y="26.4" width="2" height="2" fill="#BDBDBD"/></svg>
<div class="t" style="left:566.00px;top:1306.90px;font-size:17.6px;line-height:23px;color:#172B4D;transform:scaleX(0.94);transform-origin:0 0;">Story Points</div>
<svg class="r" style="left:768px;top:1308px" width="14" height="15"><rect x="0.5" y="1" width="13" height="13" rx="2.5" fill="#9E9E9E" opacity="0.35"/><rect x="0.5" y="0.5" width="13" height="13" rx="2.5" fill="#E6E6E6" stroke="#A6A6A6" stroke-width="1"/></svg>
<div class="r" style="left:872px;top:1305px;width:129px;height:37px;background:#F4F5F7;border-radius:3px;"></div>
<div class="t" style="left:880.50px;top:1315.68px;font-size:16.8px;line-height:22px;color:#A5ADBA;">Story Points</div>
<div class="t" style="left:1062.00px;top:1307.61px;font-size:17px;line-height:22px;color:#172B4D;">Sum</div>
<div class="t" style="left:1216.00px;top:1307.61px;font-size:17px;line-height:22px;color:#172B4D;">Story points</div>
<svg class="r" style="left:1413px;top:1308px" width="14" height="15"><rect x="0.5" y="1" width="13" height="13" rx="2.5" fill="#9E9E9E" opacity="0.35"/><rect x="0.5" y="0.5" width="13" height="13" rx="2.5" fill="#E6E6E6" stroke="#A6A6A6" stroke-width="1"/></svg>
<div class="r" style="left:1512px;top:1301px;width:78px;height:37px;background:#EBECF0;border-radius:3px;"></div>
<div class="t" style="left:1526.00px;top:1311.12px;font-size:16.96px;line-height:22px;color:#42526E;">Delete</div>
<div class="r" style="left:514px;top:1353px;width:1114px;height:2px;background:#C1C7D0;"></div>
<div class="r" style="left:561px;top:1364px;width:177px;height:37px;background:#EBECF0;border-radius:3px;"></div>
<div class="t" style="left:569.20px;top:1373.03px;font-size:17.23px;line-height:22px;color:#172B4D;">Affects Version/s</div>
<svg class="r" style="left:712.5px;top:1377px" width="17.0" height="11"><path d="M2 2 L8.5 9 L15.0 2" fill="none" stroke="#172B4D" stroke-width="2.3" stroke-linecap="round" stroke-linejoin="round"/></svg>
<svg class="r" style="left:763px;top:1367px" width="14" height="15"><rect x="0.5" y="1" width="13" height="13" rx="2.5" fill="#9E9E9E" opacity="0.35"/><rect x="0.5" y="0.5" width="13" height="13" rx="2.5" fill="#E6E6E6" stroke="#A6A6A6" stroke-width="1"/></svg>
<div class="r" style="left:867px;top:1363px;width:165px;height:37px;background:#F4F5F7;border-radius:3px;"></div>
<div class="r" style="left:1057px;top:1364px;width:128px;height:37px;background:#EBECF0;border-radius:3px;"></div>
<div class="t" style="left:1065.60px;top:1373.11px;font-size:17px;line-height:22px;color:#A5ADBA;">None</div>
<svg class="r" style="left:1159.5px;top:1377px" width="17.5" height="11"><path d="M2 2 L8.75 9 L15.5 2" fill="none" stroke="#A5ADBA" stroke-width="2.3" stroke-linecap="round" stroke-linejoin="round"/></svg>
<div class="r" style="left:1210px;top:1363px;width:173px;height:37px;background:#F4F5F7;border-radius:3px;"></div>
<svg class="r" style="left:1408px;top:1367px" width="14" height="15"><rect x="0.5" y="1" width="13" height="13" rx="2.5" fill="#9E9E9E" opacity="0.35"/><rect x="0.5" y="0.5" width="13" height="13" rx="2.5" fill="#E6E6E6" stroke="#A6A6A6" stroke-width="1"/></svg>
<div class="r" style="left:1512px;top:1363px;width:61px;height:37px;background:#0052CC;border-radius:3px;"></div>
<div class="t" style="left:1527.30px;top:1372.39px;font-size:17.64px;line-height:23px;color:#fff;-webkit-text-stroke:0.6px #fff;">Add</div>
<div class="r" style="left:514px;top:1410px;width:1114px;height:2px;background:#C1C7D0;"></div>
<div class="t" style="left:514.30px;top:1422.82px;font-size:13.52px;line-height:18px;color:#6B778C;">Footers can only be linked to numerical fields, such as "Story Points".</div>
<div class="r" style="left:320px;top:1449px;width:1321px;height:1px;background:#C8CACF;"></div>
<div class="r" style="left:1511px;top:1463px;width:64px;height:37px;background:#0052CC;border-radius:3px;"></div>
<div class="t" style="left:1524.80px;top:1472.97px;font-size:15.96px;line-height:21px;color:#fff;-webkit-text-stroke:0.6px #fff;">Save</div>
<div class="t" style="left:1589.00px;top:1471.40px;font-size:17.6px;line-height:23px;color:#0052CC;transform:scaleX(0.9135);transform-origin:0 0;">Cancel</div>
</body></html>
